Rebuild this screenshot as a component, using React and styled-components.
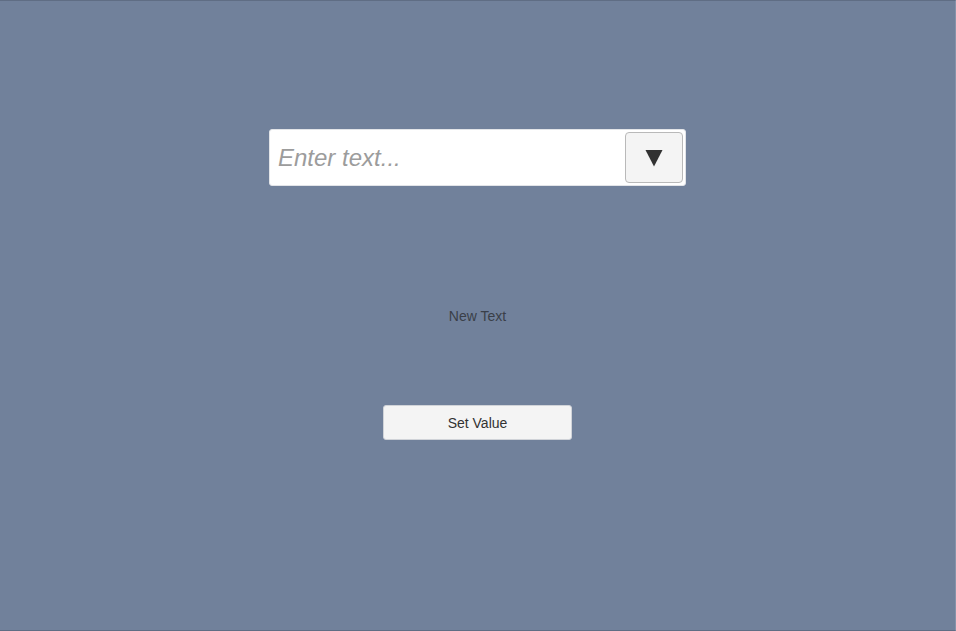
import React, { useState } from "react"
import styled, { createGlobalStyle } from "styled-components"

const GlobalStyle = createGlobalStyle`
  html, body {
    margin: 0;
    padding: 0;
    background: #71819b;
  }
  body {
    font-family: "Liberation Sans", Arial, sans-serif;
  }
`

const Screen = styled.div`
  box-sizing: border-box;
  width: 956px;
  height: 631px;
  background: #71819b;
  border-top: 1px solid #5f6d84;
  border-bottom: 1px solid #5f6d84;
  border-right: 1px solid #8593aa;
  display: flex;
  flex-direction: column;
  align-items: center;
  padding-top: 128px;
`

const Field = styled.div`
  box-sizing: border-box;
  width: 417px;
  height: 57px;
  background: #fff;
  border-radius: 3px;
  border: 1px solid #e2e4e8;
  display: flex;
  align-items: center;
  padding: 2px 2px 2px 8px;
`

const TextInput = styled.input`
  flex: 1;
  min-width: 0;
  border: none;
  outline: none;
  background: transparent;
  font-family: "Liberation Sans", Arial, sans-serif;
  font-size: 24px;
  color: #333;
  padding: 0;

  &::placeholder {
    color: #9c9c9c;
    font-style: italic;
  }
`

const DropButton = styled.button`
  box-sizing: border-box;
  width: 58px;
  height: 51px;
  background: #f4f4f4;
  border: 1px solid #b9b9b9;
  border-radius: 4px;
  display: flex;
  align-items: center;
  justify-content: center;
  padding: 0;
`

const Label = styled.div`
  margin-top: 122px;
  font-size: 14px;
  line-height: 16px;
  color: #3a3f48;
`

const ActionButton = styled.button`
  box-sizing: border-box;
  margin-top: 81px;
  width: 189px;
  height: 35px;
  background: #f4f4f4;
  border: 1px solid #d0d3d8;
  border-radius: 3px;
  font-family: "Liberation Sans", Arial, sans-serif;
  font-size: 14px;
  color: #323232;
  padding: 0;
`

const App = () => {
  const [text, setText] = useState("")
  const [value, setValue] = useState("New Text")
  return (
    <Screen>
      <GlobalStyle />
      <Field>
        <TextInput
          placeholder="Enter text..."
          value={text}
          onChange={e => setText(e.target.value)}
        />
        <DropButton>
          <svg width="18" height="18" viewBox="0 0 18 18">
            <path d="M0.5 1 L17.5 1 L9 17.5 Z" fill="#323232" />
          </svg>
        </DropButton>
      </Field>
      <Label>{value}</Label>
      <ActionButton onClick={() => text && setValue(text)}>Set Value</ActionButton>
    </Screen>
  )
}

export default App
